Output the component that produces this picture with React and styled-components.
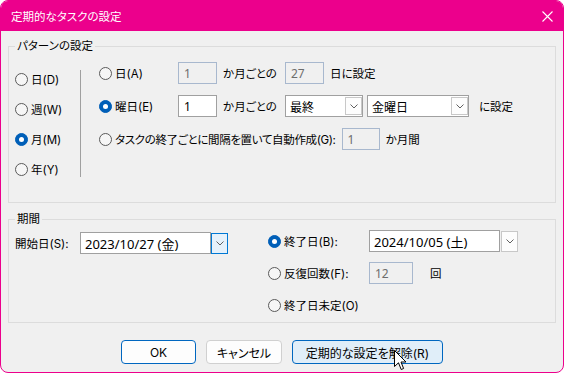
import React from "react";
import styled, { createGlobalStyle } from "styled-components";

const GlobalStyle = createGlobalStyle`
  html, body {
    margin: 0;
    padding: 0;
    background: #ffffff;
  }
  body {
    font-family: "Inter", "Noto Sans CJK JP", sans-serif;
    font-size: 11.5px;
    color: #000;
    font-feature-settings: "palt";
  }
  * {
    box-sizing: border-box;
  }
`;

const Window = styled.div`
  position: relative;
  width: 564px;
  height: 373px;
  border: 1px solid #ec008c;
  border-radius: 8px;
  overflow: hidden;
  display: flex;
  flex-direction: column;
  background: #f0f0f0;
`;

const TitleBar = styled.div`
  height: 30px;
  flex: none;
  background: #ec008c;
  color: #fff;
  display: flex;
  align-items: center;
  justify-content: space-between;
  padding: 0 10px 0 10px;
`;

const Body = styled.div`
  flex: 1;
  display: flex;
  flex-direction: column;
  padding: 7px 7px 8px;
`;

const Group = styled.fieldset`
  margin: ${p => p.$mt || 0}px 0 0;
  padding: 0 0 0 6px;
  border: 1px solid #dcdcdc;
  min-width: 0;
  display: flex;
  align-items: flex-start;
`;

const Legend = styled.legend`
  padding: 0 2px;
  margin: 0;
  line-height: 16px;
`;

const Column = styled.div`
  display: flex;
  flex-direction: column;
  gap: ${p => p.$gap || 0}px;
  padding-top: ${p => p.$pt || 0}px;
  padding-bottom: ${p => p.$pb || 0}px;
  width: ${p => (p.$w ? `${p.$w}px` : "auto")};
  flex: none;
`;

const Separator = styled.div`
  width: 1px;
  height: 107px;
  margin: 16px 18px 0 0;
  background: #a0a0a0;
  flex: none;
`;

const Row = styled.div`
  display: flex;
  align-items: center;
  height: ${p => p.$h || 22}px;
`;

const RadioLabel = styled.label`
  display: inline-flex;
  align-items: center;
  gap: 3px;
  height: 100%;
  width: ${p => (p.$w ? `${p.$w}px` : "auto")};
  letter-spacing: ${p => (p.$tight ? "-0.35px" : "normal")};
  white-space: nowrap;
  flex: none;
`;

const Circle = styled.span`
  width: 13px;
  height: 13px;
  border-radius: 50%;
  border: 1px solid ${p => (p.$on ? "#005fb8" : "#5a5a5a")};
  background: ${p => (p.$on ? "#005fb8" : "#f6f6f6")};
  display: flex;
  align-items: center;
  justify-content: center;
  flex: none;
  &::after {
    content: "";
    display: ${p => (p.$on ? "block" : "none")};
    width: 5px;
    height: 5px;
    border-radius: 50%;
    background: #fff;
  }
`;

const Text = styled.span`
  white-space: nowrap;
  flex: none;
  width: ${p => (p.$w ? `${p.$w}px` : "auto")};
  padding-left: ${p => p.$pl || 0}px;
`;

const TextBox = styled.div`
  width: ${p => p.$w}px;
  height: 22px;
  flex: none;
  margin-left: ${p => p.$ml || 0}px;
  border: 1px solid ${p => (p.$disabled ? "#a8b8ce" : "#a0a0a0")};
  background: ${p => (p.$disabled ? "#f0f0f0" : "#fff")};
  color: ${p => (p.$disabled ? "#6d6d6d" : "#000")};
  padding: 0 5px;
  display: flex;
  align-items: center;
  font-family: "Noto Sans", "Noto Sans CJK JP", sans-serif;
  font-size: 12px;
`;

const Select = styled.div`
  width: ${p => p.$w}px;
  height: 22px;
  flex: none;
  margin-right: ${p => p.$mr || 0}px;
  border: 1px solid #a0a0a0;
  background: #fff;
  padding: 1px 0 1px 1px;
  display: flex;
  font-size: 12px;
`;

const SelectText = styled.span`
  flex: 1;
  padding-left: 3px;
  display: flex;
  align-items: center;
`;

const DropBtn = styled.span`
  width: 17px;
  flex: none;
  border: 1px solid ${p => (p.$hot ? "#0078d4" : "#c8c8c8")};
  background: ${p => (p.$hot ? "#e5f1fb" : "#fdfdfd")};
  display: flex;
  align-items: center;
  justify-content: center;
`;

const DateCombo = styled.div`
  display: flex;
  align-items: center;
  gap: ${p => p.$gap || 0}px;
  flex: none;
`;

const DateField = styled.div`
  width: 131px;
  height: 22px;
  border: 1px solid #a0a0a0;
  background: #fff;
  padding-left: 4px;
  display: flex;
  align-items: center;
  font-family: "Noto Sans", "Noto Sans CJK JP", sans-serif;
  font-size: 13px;
`;

const DateBtn = styled(DropBtn)`
  height: 21px;
`;

const ButtonBar = styled.div`
  display: flex;
  justify-content: center;
  gap: 10px;
  margin-top: 17px;
`;

const Button = styled.button`
  height: 24px;
  width: ${p => p.$w}px;
  border-radius: 4px;
  font: inherit;
  font-size: 12px;
  color: #000;
  padding: 0;
  border: 1px solid ${p => (p.$variant === "plain" ? "#d0d0d0" : "#0067c0")};
  background: ${p => (p.$variant === "hover" ? "#e0eef9" : "#fdfdfd")};
`;

const Cursor = styled.svg`
  position: absolute;
  left: 393px;
  top: 349px;
`;

const Chevron = () => (
  <svg width="8" height="5" viewBox="0 0 8 5">
    <polyline points="0.5,0.5 4,4 7.5,0.5" fill="none" stroke="#606060" strokeWidth="1" />
  </svg>
);

const Radio = ({ on, w, tight, children }) => (
  <RadioLabel $w={w} $tight={tight}>
    <Circle $on={on} />
    {children}
  </RadioLabel>
);

const App = () => {
  return (
    <>
      <GlobalStyle />
      <Window>
        <TitleBar>
          <span>定期的なタスクの設定</span>
          <svg width="11" height="11" viewBox="0 0 11 11">
            <path d="M0.5 0.5 L10.5 10.5 M10.5 0.5 L0.5 10.5" stroke="#fff" strokeWidth="1.1" />
          </svg>
        </TitleBar>
        <Body>
          <Group>
            <Legend>パターンの設定</Legend>
            <Column $w={65} $pt={10} $pb={18}>
              <Row $h={30}><Radio>日(D)</Radio></Row>
              <Row $h={30}><Radio>週(W)</Radio></Row>
              <Row $h={30}><Radio on>月(M)</Radio></Row>
              <Row $h={30}><Radio>年(Y)</Radio></Row>
            </Column>
            <Separator />
            <Column $pt={8} $gap={11}>
              <Row>
                <Radio w={79}>日(A)</Radio>
                <TextBox $w={39} $disabled>1</TextBox>
                <Text $w={68} $pl={6}>か月ごとの</Text>
                <TextBox $w={39} $disabled>27</TextBox>
                <Text $pl={6}>日に設定</Text>
              </Row>
              <Row>
                <Radio w={79} on>曜日(E)</Radio>
                <TextBox $w={39}>1</TextBox>
                <Text $w={68} $pl={6}>か月ごとの</Text>
                <Select $w={78} $mr={4}>
                  <SelectText>最終</SelectText>
                  <DropBtn><Chevron /></DropBtn>
                </Select>
                <Select $w={102}>
                  <SelectText>金曜日</SelectText>
                  <DropBtn><Chevron /></DropBtn>
                </Select>
                <Text $pl={10}>に設定</Text>
              </Row>
              <Row>
                <Radio tight>タスクの終了ごとに間隔を置いて自動作成(G):</Radio>
                <TextBox $w={38} $ml={6} $disabled>1</TextBox>
                <Text $pl={6}>か月間</Text>
              </Row>
            </Column>
          </Group>

          <Group $mt={8}>
            <Legend>期間</Legend>
            <Column $w={253} $pt={5}>
              <Row>
                <Text $w={65}>開始日(S):</Text>
                <DateCombo>
                  <DateField>2023/10/27 (金)</DateField>
                  <DateBtn $hot><Chevron /></DateBtn>
                </DateCombo>
              </Row>
            </Column>
            <Column $pt={3} $pb={6} $gap={10}>
              <Row>
                <Radio w={101} on>終了日(B):</Radio>
                <DateCombo $gap={1}>
                  <DateField>2024/10/05 (土)</DateField>
                  <DateBtn><Chevron /></DateBtn>
                </DateCombo>
              </Row>
              <Row>
                <Radio w={101}>反復回数(F):</Radio>
                <TextBox $w={44} $disabled>12</TextBox>
                <Text $pl={17}>回</Text>
              </Row>
              <Row>
                <Radio>終了日未定(O)</Radio>
              </Row>
            </Column>
          </Group>

          <ButtonBar>
            <Button $w={75}>OK</Button>
            <Button $w={76} $variant="plain">キャンセル</Button>
            <Button $w={151} $variant="hover">定期的な設定を解除(R)</Button>
          </ButtonBar>
        </Body>
        <Cursor width="13" height="21" viewBox="0 0 13 21">
          <path d="M0.5 0.5 L0.5 16.5 L4.5 12.8 L7.2 19.5 L9.6 18.5 L7 12 L12 12 Z" fill="#fff" stroke="#000" strokeWidth="1" strokeLinejoin="round" />
        </Cursor>
      </Window>
    </>
  );
};

export default App;
